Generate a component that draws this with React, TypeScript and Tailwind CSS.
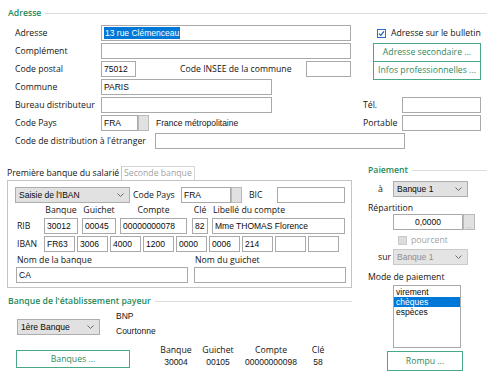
import React from 'react';

const inputFont = "font-['Liberation_Sans',Arial,sans-serif] text-[8.5px] text-[#0a0a0a]";

const Chevron = () => (
  <svg width="7" height="4" viewBox="0 0 7 4" className="shrink-0">
    <path d="M0.5 0.5 L3.5 3.5 L6.5 0.5" stroke="#6b6b6b" strokeWidth="1" fill="none" />
  </svg>
);

const Field: React.FC<{ className?: string; children?: React.ReactNode }> = ({ className = '', children }) => (
  <div className={`h-[16px] shrink-0 border border-[#a9a9a9] bg-white flex items-center px-[2px] ${inputFont} ${className}`}>
    {children}
  </div>
);

const Select: React.FC<{ className?: string; value: string; disabled?: boolean }> = ({ className = '', value, disabled }) => (
  <div
    className={`h-[16px] shrink-0 border flex items-center justify-between pl-[3px] pr-[5px] ${inputFont} ${
      disabled ? 'bg-[#e4e4e4] border-[#cacaca] !text-[#8f8f8f]' : 'bg-[#e1e1e1] border-[#adadad]'
    } ${className}`}
  >
    <span>{value}</span>
    <Chevron />
  </div>
);

const DotsButton: React.FC<{ className?: string; dots?: boolean }> = ({ className = '', dots }) => (
  <div className={`h-[16px] shrink-0 bg-[#e1e1e1] border border-[#b9b9b9] flex items-end justify-center text-[6px] text-[#9a9a9a] ${className}`}>
    {dots ? '...' : ''}
  </div>
);

const GreenButton: React.FC<{ className?: string; children: React.ReactNode }> = ({ className = '', children }) => (
  <div className={`shrink-0 border border-[#4aa985] bg-white flex items-center justify-center text-[#2f8a62] ${className}`}>
    {children}
  </div>
);

const SectionTitle: React.FC<{ title: string; className?: string }> = ({ title, className = '' }) => (
  <div className={`flex items-center h-[12px] ${className}`}>
    <span className="text-[#1f8a5b] font-semibold">{title}</span>
    <div className="flex-1 h-px bg-[#dcdcdc] ml-[4px]" />
  </div>
);

const Row: React.FC<{ label: string; children: React.ReactNode }> = ({ label, children }) => (
  <div className="h-[16px] flex items-center">
    <span className="w-[101px] pl-[15px] shrink-0">{label}</span>
    {children}
  </div>
);

export default function App() {
  return (
    <div className="w-[491px] h-[376px] overflow-hidden bg-white font-['Open_Sans','Noto_Sans',sans-serif] text-[8.7px] leading-none text-[#141414]">
      <SectionTitle title="Adresse" className="pt-[7px] pl-[8px] pr-[4px] box-content" />

      {/* adresse */}
      <div className="flex mt-[6px]">
        <div className="w-[352px] shrink-0 flex flex-col gap-[2px]">
          <Row label="Adresse">
            <Field className="w-[250px]">
              <span className="bg-[#0078d7] text-white leading-[12px] px-[1px]">13 rue Clémenceau</span>
            </Field>
          </Row>
          <Row label="Complément">
            <Field className="w-[250px]" />
          </Row>
          <Row label="Code postal">
            <Field className="w-[35px]">75012</Field>
            <span className="ml-[44px] w-[126px] shrink-0">Code INSEE de la commune</span>
            <Field className="w-[45px]" />
          </Row>
          <Row label="Commune">
            <Field className="w-[171px]">PARIS</Field>
          </Row>
          <Row label="Bureau distributeur">
            <Field className="w-[171px]" />
          </Row>
          <Row label="Code Pays">
            <Field className="w-[37px]">FRA</Field>
            <DotsButton className="w-[11px]" />
            <span className="ml-[7px] font-['Liberation_Sans',Arial,sans-serif] text-[8.5px]">France métropolitaine</span>
          </Row>
        </div>

        <div className="flex-1 flex flex-col">
          <div className="h-[16px] flex items-center pl-[25px]">
            <div className="w-[9px] h-[9px] border border-[#2a6fc2] bg-white flex items-center justify-center">
              <svg width="7" height="7" viewBox="0 0 7 7">
                <path d="M1 3.6 L2.8 5.4 L6 1.4" stroke="#1a5fb4" strokeWidth="1.3" fill="none" />
              </svg>
            </div>
            <span className="ml-[5px]">Adresse sur le bulletin</span>
          </div>
          <GreenButton className="ml-[21px] mt-[2px] w-[108px] h-[19px]">Adresse secondaire ...</GreenButton>
          <GreenButton className="ml-[21px] -mt-px w-[108px] h-[19px]">Infos professionnelles ...</GreenButton>
          <div className="h-[16px] flex items-center mt-[17px] pl-[11px]">
            <span className="w-[39px] shrink-0">Tél.</span>
            <Field className="w-[79px]" />
          </div>
          <div className="h-[16px] flex items-center mt-[2px] pl-[11px]">
            <span className="w-[39px] shrink-0">Portable</span>
            <Field className="w-[79px]" />
          </div>
        </div>
      </div>

      <div className="h-[16px] flex items-center mt-[2px]">
        <span className="w-[155px] pl-[15px] shrink-0">Code de distribution à l'étranger</span>
        <Field className="w-[250px]" />
      </div>

      {/* banque + paiement */}
      <div className="flex">
        <div className="w-[355px] shrink-0">
          <div className="flex items-end h-[14px] mt-[17px] ml-[7px]">
            <div className="h-[14px] w-[115px] border-r border-[#c4c4c4] flex items-center whitespace-nowrap overflow-hidden">
              Première banque du salarié
            </div>
            <div className="h-[14px] w-[73px] border-t border-r border-[#d6d6d6] flex items-center pl-[2px] text-[#a3a3a3] whitespace-nowrap">
              Seconde banque
            </div>
          </div>
          <div className="ml-[7px] w-[345px] h-[108px] border border-[#c4c4c4]">
            <div className="flex items-center h-[16px] mt-[6px] ml-[7px]">
              <Select className="w-[115px]" value="Saisie de l'IBAN" />
              <span className="ml-[3px] w-[48px] shrink-0">Code Pays</span>
              <Field className="w-[50px]">FRA</Field>
              <DotsButton className="w-[11px]" />
              <span className="ml-[7px] w-[28px] shrink-0">BIC</span>
              <Field className="w-[68px]" />
            </div>
            <div className="flex items-center h-[12px] mt-[1px] ml-[36px]">
              <span className="w-[34px] text-center">Banque</span>
              <span className="ml-[4px] w-[34px] text-center">Guichet</span>
              <span className="ml-[4px] w-[67px] text-center">Compte</span>
              <span className="ml-[5px] w-[16px] text-center">Clé</span>
              <span className="ml-[5px]">Libellé du compte</span>
            </div>
            <div className="flex items-center h-[16px] mt-[2px]">
              <span className="w-[36px] pl-[9px] shrink-0">RIB</span>
              <Field className="w-[34px]">30012</Field>
              <Field className="ml-[4px] w-[34px]">00045</Field>
              <Field className="ml-[4px] w-[67px]">00000000078</Field>
              <Field className="ml-[5px] w-[16px]">82</Field>
              <Field className="ml-[4px] w-[133px]">Mme THOMAS Florence</Field>
            </div>
            <div className="flex items-center h-[16px] mt-[2px] gap-[2px]">
              <span className="w-[34px] pl-[9px] shrink-0">IBAN</span>
              <Field className="w-[31px]">FR63</Field>
              <Field className="w-[31px]">3006</Field>
              <Field className="w-[31px]">4000</Field>
              <Field className="w-[31px]">1200</Field>
              <Field className="w-[31px]">0000</Field>
              <Field className="w-[31px]">0006</Field>
              <Field className="w-[31px]">214</Field>
              <Field className="w-[31px]" />
              <Field className="w-[31px]" />
            </div>
            <div className="flex items-center h-[12px] mt-[2px]">
              <span className="w-[187px] pl-[9px] shrink-0">Nom de la banque</span>
              <span>Nom du guichet</span>
            </div>
            <div className="flex items-center h-[16px] mt-[1px] ml-[8px]">
              <Field className="w-[172px]">CA</Field>
              <Field className="ml-[6px] w-[152px]" />
            </div>
          </div>

          <SectionTitle title="Banque de l'établissement payeur" className="mt-[7px] ml-[8px] w-[344px]" />
          <div className="flex mt-[2px]">
            <Select className="ml-[17px] mt-[10px] w-[83px]" value="1ère Banque" />
            <div className="ml-[16px] flex flex-col leading-[15px] font-['Liberation_Sans',Arial,sans-serif] text-[8.5px]">
              <span>BNP</span>
              <span>Courtonne</span>
            </div>
          </div>
          <div className="flex items-start mt-[5px]">
            <GreenButton className="ml-[16px] mt-[6px] w-[114px] h-[18px]">Banques ...</GreenButton>
            <div className="ml-[26px] w-[40px] flex flex-col items-center leading-[12px]">
              <span>Banque</span>
              <span className="font-['Liberation_Sans',Arial,sans-serif] text-[8.5px]">30004</span>
            </div>
            <div className="ml-[4px] w-[36px] flex flex-col items-center leading-[12px]">
              <span>Guichet</span>
              <span className="font-['Liberation_Sans',Arial,sans-serif] text-[8.5px]">00105</span>
            </div>
            <div className="w-[70px] flex flex-col items-center leading-[12px]">
              <span>Compte</span>
              <span className="font-['Liberation_Sans',Arial,sans-serif] text-[8.5px]">00000000098</span>
            </div>
            <div className="w-[24px] flex flex-col items-center leading-[12px]">
              <span>Clé</span>
              <span className="font-['Liberation_Sans',Arial,sans-serif] text-[8.5px]">58</span>
            </div>
          </div>
        </div>

        <div className="flex-1 flex flex-col">
          <SectionTitle title="Paiement" className="mt-[15px] ml-[13px] mr-[4px]" />
          <div className="flex items-center h-[16px] mt-[5px] pl-[23px]">
            <span className="w-[15px] shrink-0">à</span>
            <Select className="w-[75px]" value="Banque 1" />
          </div>
          <div className="h-[12px] flex items-center mt-[5px] pl-[13px]">Répartition</div>
          <div className="flex items-center h-[16px] pl-[38px]">
            <Field className="w-[70px] justify-center">0,0000</Field>
            <DotsButton className="w-[12px]" dots />
          </div>
          <div className="flex items-center h-[12px] mt-[4px] pl-[43px]">
            <div className="w-[9px] h-[9px] bg-[#dcdcdc] border border-[#cacaca]" />
            <span className="ml-[4px] text-[#a3a3a3]">pourcent</span>
          </div>
          <div className="flex items-center h-[16px] mt-[3px] pl-[23px]">
            <span className="w-[15px] shrink-0">sur</span>
            <Select className="w-[75px]" value="Banque 1" disabled />
          </div>
          <div className="h-[12px] flex items-center mt-[6px] pl-[13px]">Mode de paiement</div>
          <div className={`ml-[38px] mt-[2px] w-[68px] h-[63px] border border-[#a9a9a9] pt-[1px] ${inputFont}`}>
            <div className="h-[10px] flex items-center pl-[2px]">virement</div>
            <div className="h-[10px] flex items-center pl-[2px] bg-[#0078d7] text-white">chèques</div>
            <div className="h-[10px] flex items-center pl-[2px]">espèces</div>
          </div>
          <GreenButton className="ml-[32px] mt-[3px] w-[76px] h-[20px]">Rompu ...</GreenButton>
        </div>
      </div>
    </div>
  );
}
